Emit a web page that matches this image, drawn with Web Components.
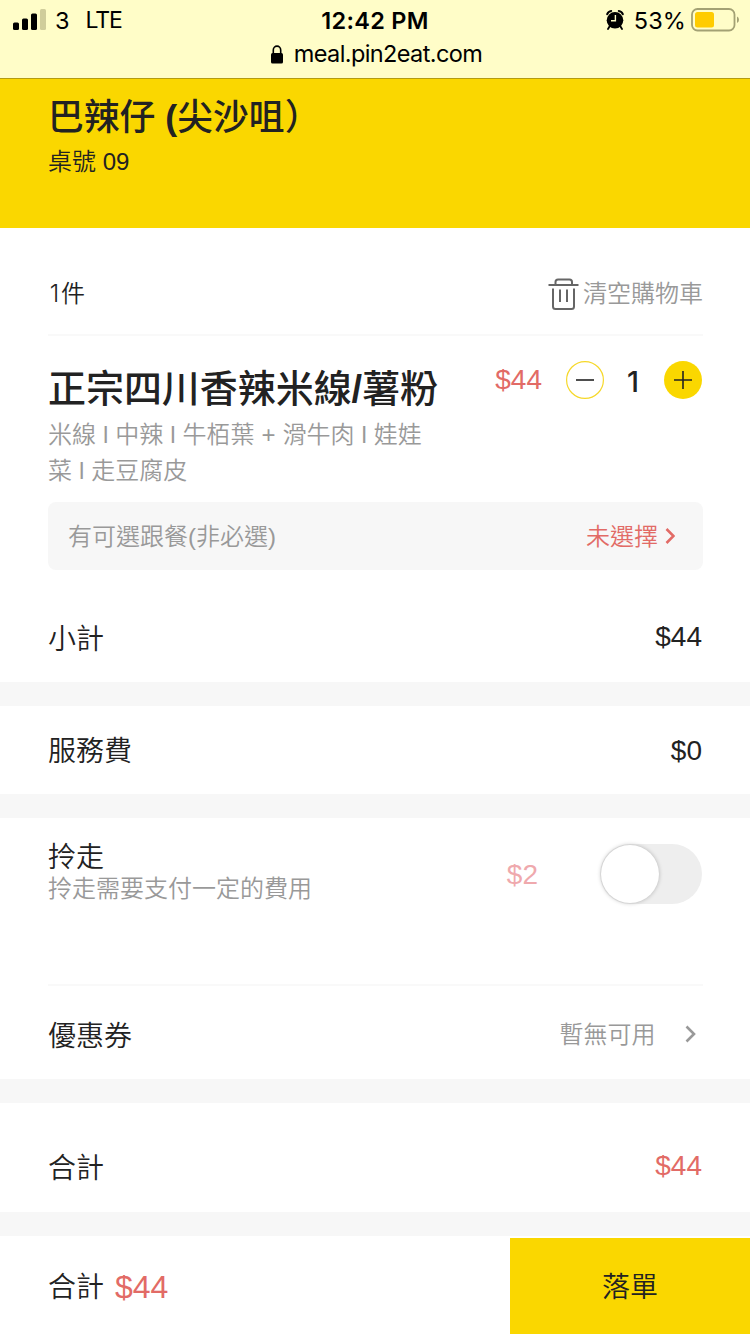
<!DOCTYPE html>
<html lang="zh-Hant">
<head>
<meta charset="utf-8">
<title>購物車</title>
<style>
body{margin:0;background:#fff;color:#222;font-family:"Liberation Sans","Noto Sans CJK TC",sans-serif;font-size:28px;font-weight:350}
</style>
</head>
<body>
<meal-app></meal-app>
<script>
function define(name, css, html){
  const t=document.createElement('template');
  t.innerHTML='<style>*{box-sizing:border-box}:host{display:block;box-sizing:border-box}'+css+'</style>'+html;
  customElements.define(name,class extends HTMLElement{
    constructor(){super();this.attachShadow({mode:'open'}).append(t.content.cloneNode(true));}
  });
}

define('status-bar',`
:host{height:79px;background:#fffdc8;border-bottom:1px solid #b39b12;color:#000;font-family:Inter,sans-serif;font-weight:400}
.top{display:grid;grid-template-columns:1fr auto 1fr;align-items:center;height:40px;padding:1px 11px 0 13px;font-size:24px;line-height:39px}
.l,.r{display:flex;align-items:center}
.l span:first-of-type{margin-left:9px;font-size:23.5px}.l span+span{margin-left:16px;font-size:23px;letter-spacing:-1.1px}
.l svg{margin-top:-1px}
.r{justify-content:flex-end}
.r svg{margin-top:-1px}
.time{font-weight:600;font-size:23.5px;letter-spacing:.3px;margin-left:-2px}
.pct{margin:0 5px 0 10px;font-size:23.5px;letter-spacing:.1px}
.url{display:flex;align-items:center;justify-content:center;gap:11px;height:28px;padding-left:3px;font-size:23.5px;line-height:28px;letter-spacing:-.6px}
svg{display:block;flex:none}`,`
<div class="top">
 <div class="l"><svg width="33" height="22" viewBox="0 0 33 22"><rect y="13.5" width="6" height="7.5" rx="1.5"/><rect x="9" y="9.5" width="6" height="11.5" rx="1.5"/><rect x="18" y="4.5" width="6" height="16.5" rx="1.5"/><rect x="27" y="0" width="6" height="21" rx="1.5" fill="#d0cd9b"/></svg><span>3</span><span>LTE</span></div>
 <div class="time">12:42 PM</div>
 <div class="r"><svg width="18" height="20" viewBox="0 0 18 20"><circle cx="9" cy="10.3" r="8.3"/><path d="M1.2 4.2Q2.3 1.4 5.2 1M16.8 4.2Q15.7 1.4 12.8 1" stroke="#000" stroke-width="2" fill="none" stroke-linecap="round"/><path d="M3.5 16.5 2 19M14.5 16.5 16 19" stroke="#000" stroke-width="1.8" stroke-linecap="round"/><path d="M9.4 5v5.8H5" stroke="#fffdc8" stroke-width="1.4" fill="none"/></svg><span class="pct">53%</span><svg width="48" height="24" viewBox="0 0 48 24"><rect x="1" y="1" width="42.5" height="21.5" rx="5.5" fill="none" stroke="#a3a174" stroke-width="1.8"/><rect x="4" y="4" width="19" height="15.5" rx="2.5" fill="#fc0"/><path d="M46 8.5q2 1 2 3.2T46 15z" fill="#a3a174"/></svg></div>
</div>
<div class="url"><svg width="12" height="19" viewBox="0 0 12 19"><rect y="8" width="12" height="10.5" rx="1.6"/><path d="M2.3 9V5a3.7 3.9 0 0 1 7.4 0v4" fill="none" stroke="#000" stroke-width="1.6"/></svg><span>meal.pin2eat.com</span></div>`);

define('shop-header',`
:host{height:149px;background:#fad700;padding:18px 48px 0}
::slotted([slot=name]){display:block;font-size:35.8px;font-weight:500;line-height:42px;color:#222}
::slotted([slot=table]){display:block;font-size:24px;line-height:46px}`,
`<slot name="name"></slot><slot name="table"></slot>`);

define('cart-count',`
:host{display:flex;align-items:center;justify-content:space-between;margin:0 47px 0 48px;height:108px;padding-top:25px;border-bottom:2px solid #f9f9f9;font-size:24px;line-height:38px}
.n{display:inline-block;width:13px;text-align:center;font-family:Inter,sans-serif;font-size:24px}
button{display:flex;align-items:center;gap:4px;background:none;border:0;padding:0;font:inherit;color:#999}
svg{display:block}`,`
<div><span class="n"><slot name="n"></slot></span><slot></slot></div><button><svg width="31" height="32" viewBox="0 0 31 32" fill="none" stroke="#666" stroke-width="2"><path d="M.5 7H30.5M7.5 7V4Q7.5 1.5 10 1.5H21.5Q24 1.5 24 4V7M5 10.5V28.5Q5 31 7.5 31H23.5Q26 31 26 28.5V10.5M12 11.5V24M19 11.5V24"/></svg><slot name="action"></slot></button>`);

define('qty-stepper',`
:host{display:grid;grid-template-columns:38px 60px 38px;align-items:center;text-align:center;font-size:29px;line-height:38px;height:38px;grid-template-rows:38px}
span{font-family:Inter,sans-serif;font-weight:500;padding-right:2px;padding-top:2px;height:38px}
svg{display:block}`,`
<svg width="38" height="38" fill="none"><circle cx="19" cy="19" r="18.4" stroke="#f6d829" stroke-width="1.2"/><path d="M10 19H28" stroke="#222" stroke-width="1.6"/></svg><span><slot></slot></span><svg width="38" height="38"><circle cx="19" cy="19" r="19" fill="#fad700"/><path d="M10 19H28M19 10V28" stroke="#222" stroke-width="1.6"/></svg>`);

define('cart-item',`
:host{margin:0 48px;padding-top:25px;height:166px}
.row{display:grid;grid-template-columns:1fr auto auto;align-items:start}
.price{color:#e26b66;line-height:38px;margin-right:24px}
.info{width:392px}
.name{font-size:38px;line-height:56px;font-weight:500;white-space:nowrap;letter-spacing:-.05px}
.desc{font-size:24px;line-height:36px;color:#999;word-spacing:.3px}`,`
<div class="row"><div class="info"><div class="name"><slot name="name"></slot></div><div class="desc"><slot name="desc"></slot></div></div><div class="price"><slot name="price"></slot></div><qty-stepper>1</qty-stepper></div>`);

define('side-option',`
:host{display:flex;align-items:center;justify-content:space-between;margin:0 47px 0 48px;height:68px;padding:2px 28px 0 20px;border-radius:8px;background:#f7f7f7;font-size:24px;color:#999;line-height:36px}
.v{display:flex;align-items:center;gap:7px;color:#e26b66}svg{display:block;margin-top:-2px}`,`
<slot></slot><div class="v"><slot name="value"></slot><svg width="10" height="16" fill="none"><path d="M1.5 1 8.5 8 1.5 15" stroke="#e26b66" stroke-width="2.6"/></svg></div>`);

define('sum-row',`
:host{display:flex;align-items:center;justify-content:space-between;padding:4px 48px 0 48px;line-height:36px}
:host([red]) .v{color:#e26b66}
.v{margin-top:-6px}
:host(.fee) .v{margin-top:-2px}`,`<slot></slot><div class="v"><slot name="value"></slot></div>`);

define('section-gap',`:host{height:24px;background:#f7f7f7}`,``);

define('toggle-switch',`
:host{width:102px;height:60px;border-radius:30px;background:#eee;padding:1px}
i{display:block;width:58px;height:58px;border-radius:50%;background:#fff;box-shadow:0 0 4px rgba(0,0,0,.25)}`,`<i></i>`);

define('takeaway-row',`
:host{display:grid;grid-template-columns:1fr auto 102px;align-items:start;margin:0 47px 0 48px;padding:22px 1px 0 0;height:168px;border-bottom:2px solid #f9f9f9}
.t{line-height:36px}.d{font-size:24px;line-height:26px;color:#999}
.p{color:#efa9ad;line-height:70px;margin-right:62px}
toggle-switch{margin-top:4px}`,`
<div><div class="t"><slot></slot></div><div class="d"><slot name="desc"></slot></div></div><div class="p"><slot name="price"></slot></div><toggle-switch></toggle-switch>`);

define('coupon-row',`
:host{display:flex;align-items:center;justify-content:space-between;padding:8px 54px 0 48px;height:93px;line-height:38px}
.v{display:flex;align-items:center;gap:29.5px;font-size:24px;color:#999;margin-top:-4px}svg{display:block;margin-top:-1px}`,`
<slot></slot><div class="v"><slot name="value"></slot><svg width="11" height="18" fill="none"><path d="M1.5 1.5 9 9 1.5 16.5" stroke="#999" stroke-width="2.6"/></svg></div>`);

define('order-bar',`
:host{display:flex;height:98px;padding-top:2px;line-height:38px}
.s{flex:1;display:flex;align-items:center;gap:11px;padding:4px 0 0 48px}
b{font-weight:300;font-size:32px;color:#e26b66;margin-top:-2px}
button{width:240px;border:0;background:#fad700;color:#222;font:inherit;padding:4px 0 0}`,`
<div class="s"><slot></slot><b><slot name="total"></slot></b></div><button><slot name="action"></slot></button>`);

define('meal-app',`
:host{width:750px;height:1334px;overflow:hidden;background:#fff}
.sub{height:112px;padding-top:27px}.fee{height:88px}.total{height:109px;padding-top:22px}`,`
<status-bar></status-bar>
<shop-header><span slot="name">巴辣仔 <b>(</b>尖沙咀）</span><span slot="table">桌號 09</span></shop-header>
<cart-count><span slot="n">1</span>件<span slot="action">清空購物車</span></cart-count>
<cart-item><span slot="name">正宗四川香辣米線<b>/</b>薯粉</span><span slot="desc">米線 l 中辣 l 牛栢葉 + 滑牛肉 l 娃娃菜 l 走豆腐皮</span><span slot="price">$44</span></cart-item>
<side-option>有可選跟餐(非必選)<span slot="value">未選擇</span></side-option>
<sum-row class="sub">小計<span slot="value">$44</span></sum-row>
<section-gap></section-gap>
<sum-row class="fee">服務費<span slot="value">$0</span></sum-row>
<section-gap></section-gap>
<takeaway-row>拎走<span slot="desc">拎走需要支付一定的費用</span><span slot="price">$2</span></takeaway-row>
<coupon-row>優惠券<span slot="value">暫無可用</span></coupon-row>
<section-gap></section-gap>
<sum-row class="total" red>合計<span slot="value">$44</span></sum-row>
<section-gap></section-gap>
<order-bar>合計<span slot="total">$44</span><span slot="action">落單</span></order-bar>`);
</script>
</body>
</html>
